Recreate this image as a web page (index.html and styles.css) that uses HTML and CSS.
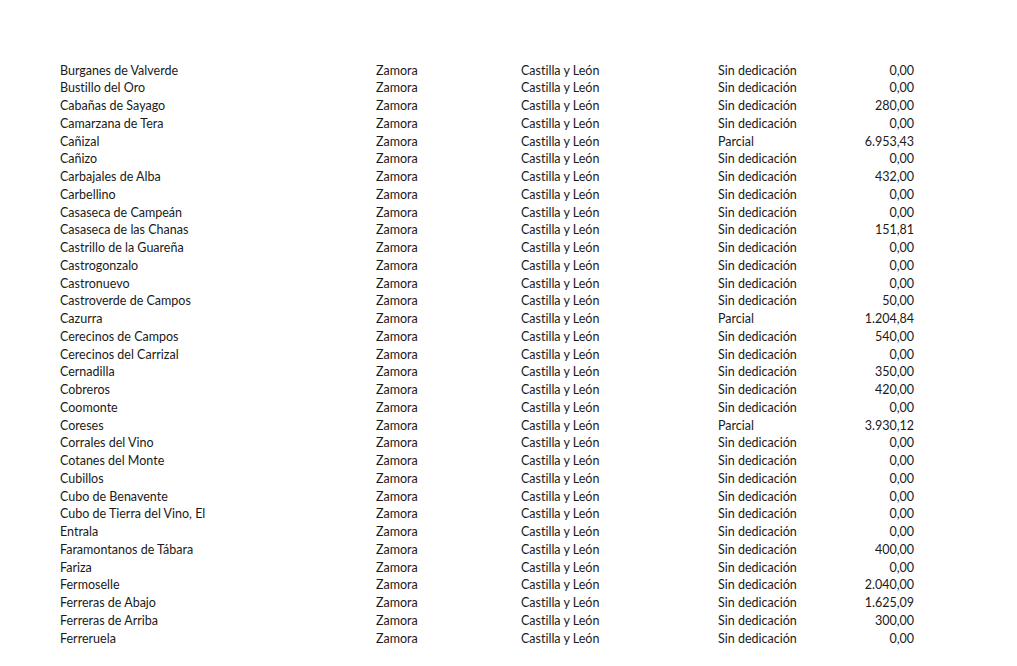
FILE: index.html
```html
<!DOCTYPE html>
<html lang="es">
<head>
<meta charset="utf-8">
<link rel="stylesheet" href="styles.css">
</head>
<body>
<div class="sheet">
<div class="row"><span>Burganes de Valverde</span><span>Zamora</span><span>Castilla y León</span><span>Sin dedicación</span><span class="num">0,00</span></div>
<div class="row"><span>Bustillo del Oro</span><span>Zamora</span><span>Castilla y León</span><span>Sin dedicación</span><span class="num">0,00</span></div>
<div class="row"><span>Cabañas de Sayago</span><span>Zamora</span><span>Castilla y León</span><span>Sin dedicación</span><span class="num">280,00</span></div>
<div class="row"><span>Camarzana de Tera</span><span>Zamora</span><span>Castilla y León</span><span>Sin dedicación</span><span class="num">0,00</span></div>
<div class="row"><span>Cañizal</span><span>Zamora</span><span>Castilla y León</span><span>Parcial</span><span class="num">6.953,43</span></div>
<div class="row"><span>Cañizo</span><span>Zamora</span><span>Castilla y León</span><span>Sin dedicación</span><span class="num">0,00</span></div>
<div class="row"><span>Carbajales de Alba</span><span>Zamora</span><span>Castilla y León</span><span>Sin dedicación</span><span class="num">432,00</span></div>
<div class="row"><span>Carbellino</span><span>Zamora</span><span>Castilla y León</span><span>Sin dedicación</span><span class="num">0,00</span></div>
<div class="row"><span>Casaseca de Campeán</span><span>Zamora</span><span>Castilla y León</span><span>Sin dedicación</span><span class="num">0,00</span></div>
<div class="row"><span>Casaseca de las Chanas</span><span>Zamora</span><span>Castilla y León</span><span>Sin dedicación</span><span class="num">151,81</span></div>
<div class="row"><span>Castrillo de la Guareña</span><span>Zamora</span><span>Castilla y León</span><span>Sin dedicación</span><span class="num">0,00</span></div>
<div class="row"><span>Castrogonzalo</span><span>Zamora</span><span>Castilla y León</span><span>Sin dedicación</span><span class="num">0,00</span></div>
<div class="row"><span>Castronuevo</span><span>Zamora</span><span>Castilla y León</span><span>Sin dedicación</span><span class="num">0,00</span></div>
<div class="row"><span>Castroverde de Campos</span><span>Zamora</span><span>Castilla y León</span><span>Sin dedicación</span><span class="num">50,00</span></div>
<div class="row"><span>Cazurra</span><span>Zamora</span><span>Castilla y León</span><span>Parcial</span><span class="num">1.204,84</span></div>
<div class="row"><span>Cerecinos de Campos</span><span>Zamora</span><span>Castilla y León</span><span>Sin dedicación</span><span class="num">540,00</span></div>
<div class="row"><span>Cerecinos del Carrizal</span><span>Zamora</span><span>Castilla y León</span><span>Sin dedicación</span><span class="num">0,00</span></div>
<div class="row"><span>Cernadilla</span><span>Zamora</span><span>Castilla y León</span><span>Sin dedicación</span><span class="num">350,00</span></div>
<div class="row"><span>Cobreros</span><span>Zamora</span><span>Castilla y León</span><span>Sin dedicación</span><span class="num">420,00</span></div>
<div class="row"><span>Coomonte</span><span>Zamora</span><span>Castilla y León</span><span>Sin dedicación</span><span class="num">0,00</span></div>
<div class="row"><span>Coreses</span><span>Zamora</span><span>Castilla y León</span><span>Parcial</span><span class="num">3.930,12</span></div>
<div class="row"><span>Corrales del Vino</span><span>Zamora</span><span>Castilla y León</span><span>Sin dedicación</span><span class="num">0,00</span></div>
<div class="row"><span>Cotanes del Monte</span><span>Zamora</span><span>Castilla y León</span><span>Sin dedicación</span><span class="num">0,00</span></div>
<div class="row"><span>Cubillos</span><span>Zamora</span><span>Castilla y León</span><span>Sin dedicación</span><span class="num">0,00</span></div>
<div class="row"><span>Cubo de Benavente</span><span>Zamora</span><span>Castilla y León</span><span>Sin dedicación</span><span class="num">0,00</span></div>
<div class="row"><span>Cubo de Tierra del Vino, El</span><span>Zamora</span><span>Castilla y León</span><span>Sin dedicación</span><span class="num">0,00</span></div>
<div class="row"><span>Entrala</span><span>Zamora</span><span>Castilla y León</span><span>Sin dedicación</span><span class="num">0,00</span></div>
<div class="row"><span>Faramontanos de Tábara</span><span>Zamora</span><span>Castilla y León</span><span>Sin dedicación</span><span class="num">400,00</span></div>
<div class="row"><span>Fariza</span><span>Zamora</span><span>Castilla y León</span><span>Sin dedicación</span><span class="num">0,00</span></div>
<div class="row"><span>Fermoselle</span><span>Zamora</span><span>Castilla y León</span><span>Sin dedicación</span><span class="num">2.040,00</span></div>
<div class="row"><span>Ferreras de Abajo</span><span>Zamora</span><span>Castilla y León</span><span>Sin dedicación</span><span class="num">1.625,09</span></div>
<div class="row"><span>Ferreras de Arriba</span><span>Zamora</span><span>Castilla y León</span><span>Sin dedicación</span><span class="num">300,00</span></div>
<div class="row"><span>Ferreruela</span><span>Zamora</span><span>Castilla y León</span><span>Sin dedicación</span><span class="num">0,00</span></div>
</div>
</body>
</html>
```
FILE: styles.css
```css
html, body {
  margin: 0;
  padding: 0;
  background: #ffffff;
}
body {
  font-family: Lato, "Open Sans", "Liberation Sans", sans-serif;
  font-size: 12.5px;
  color: #1a1a1a;
  font-variant-ligatures: none;
}
.sheet {
  padding: 61.5px 0 0 60px;
}
.row {
  display: grid;
  grid-template-columns: 316px 145px 197px 100px 96px;
  height: 17.75px;
  line-height: 17.75px;
  white-space: nowrap;
}
.num {
  text-align: right;
}
```
